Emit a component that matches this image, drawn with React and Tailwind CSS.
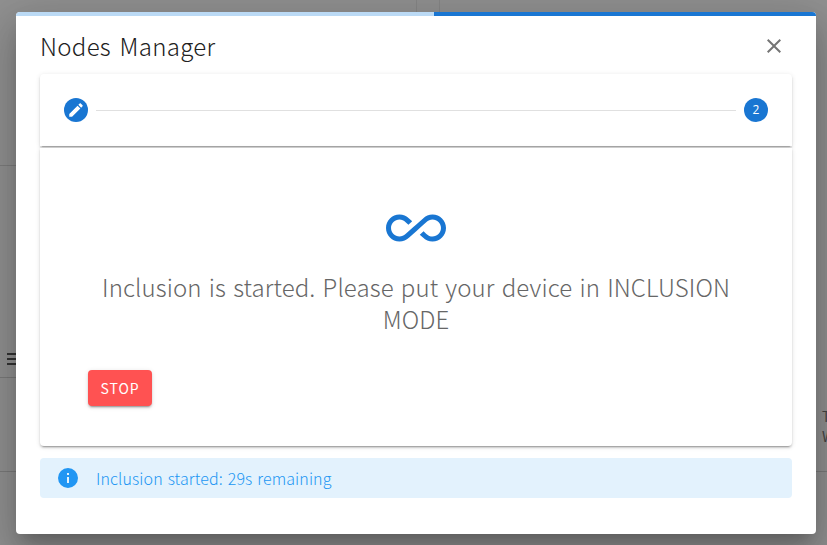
import React from "react";

const FONT = "font-['Noto_Sans_CJK_KR','Noto_Sans',sans-serif]";

function MdiIcon({ d, className }) {
  return (
    <svg viewBox="0 0 24 24" fill="currentColor" className={className}>
      <path d={d} />
    </svg>
  );
}

const PENCIL =
  "M20.71,7.04C21.1,6.65 21.1,6 20.71,5.63L18.37,3.29C18,2.9 17.35,2.9 16.96,3.29L15.12,5.12L18.87,8.87M3,17.25V21H6.75L17.81,9.93L14.06,6.18L3,17.25Z";
const CLOSE =
  "M19,6.41L17.59,5L12,10.59L6.41,5L5,6.41L10.59,12L5,17.59L6.41,19L12,13.41L17.59,19L19,17.59L13.41,12L19,6.41Z";
const INFO =
  "M13,9H11V7H13M13,17H11V11H13M12,2A10,10 0 0,0 2,12A10,10 0 0,0 12,22A10,10 0 0,0 22,12A10,10 0 0,0 12,2Z";
const ALL_INCLUSIVE =
  "M18.6 6.62c-1.44 0-2.8.56-3.77 1.53L12 10.66 10.48 12h.01L7.8 14.39c-.64.64-1.49.99-2.4.99-1.87 0-3.39-1.51-3.39-3.38S3.53 8.62 5.4 8.62c.91 0 1.76.35 2.44 1.03l1.13 1 1.51-1.34L9.22 8.2C8.2 7.18 6.84 6.62 5.4 6.62 2.42 6.62 0 9.04 0 12s2.42 5.38 5.4 5.38c1.44 0 2.8-.56 3.77-1.53l2.83-2.5.01.01L13.52 12h-.01l2.69-2.39c.64-.64 1.49-.99 2.4-.99 1.87 0 3.39 1.51 3.39 3.38s-1.52 3.38-3.39 3.38c-.9 0-1.76-.35-2.44-1.03l-1.14-1.01-1.51 1.34 1.27 1.12c1.02 1.01 2.37 1.57 3.82 1.57 2.98 0 5.4-2.41 5.4-5.38s-2.42-5.37-5.4-5.37z";

const CARD_SHADOW =
  "shadow-[0_3px_1px_-2px_rgba(0,0,0,0.2),0_2px_2px_0_rgba(0,0,0,0.14),0_1px_5px_0_rgba(0,0,0,0.12)]";

export default function App() {
  return (
    <div className={`relative h-[545px] w-[827px] overflow-hidden bg-[#909090] ${FONT}`}>
      {/* Dimmed page behind the dialog */}
      <div className="absolute left-0 top-[165px] h-px w-4 bg-[#7d7d7d]" />
      <div className="absolute left-0 top-[377px] h-px w-4 bg-[#7a7a7a]" />
      <div className="absolute left-0 top-[471px] h-px w-4 bg-[#7a7a7a]" />
      <div className="absolute right-0 top-[471px] h-px w-[11px] bg-[#7a7a7a]" />
      <div className="absolute left-[416px] top-0 h-3 w-px bg-[#858585]" />
      <div className="absolute left-[439px] top-0 h-3 w-px bg-[#858585]" />
      <div className="absolute left-[7px] top-[353px] flex w-[10px] flex-col gap-[3px]">
        <div className="h-[2px] bg-[#333]" />
        <div className="h-[2px] bg-[#333]" />
        <div className="h-[2px] bg-[#333]" />
      </div>
      <div className="absolute left-[822px] top-[406px] text-sm leading-5 text-[#444]">
        <div>T</div>
        <div>W</div>
      </div>

      {/* Dialog */}
      <div className="absolute left-4 top-3 flex h-[522px] w-[800px] flex-col overflow-hidden rounded bg-white shadow-[0_11px_15px_-7px_rgba(0,0,0,0.2),0_24px_38px_3px_rgba(0,0,0,0.14),0_9px_46px_8px_rgba(0,0,0,0.12)]">
        <div className="flex h-1 bg-[#bbdaf5]">
          <div className="w-[418px]" />
          <div className="flex-1 bg-[#1976d2]" />
        </div>

        <div className="flex h-[58px] items-center justify-between pl-6 pr-[30px]">
          <span className="mt-[2px] text-2xl font-light tracking-[0.3px] text-[#212121] [word-spacing:3px]">Nodes Manager</span>
          <MdiIcon d={CLOSE} className="mt-[2px] h-6 w-6 text-[#757575]" />
        </div>

        <div className="mx-6 flex flex-col">
          {/* Stepper */}
          <div className={`flex h-[72px] items-center gap-2 rounded-t bg-white px-6 ${CARD_SHADOW}`}>
            <div className="flex h-6 w-6 items-center justify-center rounded-full bg-[#1976d2] text-white">
              <MdiIcon d={PENCIL} className="h-[18px] w-[18px]" />
            </div>
            <div className="h-px flex-1 bg-[#e0e0e0]" />
            <div className="flex h-6 w-6 items-center justify-center rounded-full bg-[#1976d2] font-['Open_Sans',sans-serif] text-xs text-white">
              2
            </div>
          </div>

          {/* Step content */}
          <div className={`mt-[2px] flex h-[298px] flex-col rounded-b bg-white px-12 ${CARD_SHADOW}`}>
            <MdiIcon d={ALL_INCLUSIVE} className="mx-auto mt-[50px] h-[60px] w-[60px] text-[#1976d2]" />
            <p className="mt-[13px] text-center text-2xl font-light leading-8 tracking-[0.1px] text-[#666666] [word-spacing:1.75px]">
              Inclusion is started. Please put your device in INCLUSION MODE
            </p>
            <button className={`mt-[35px] h-9 w-16 rounded bg-[#ff5252] text-sm font-normal tracking-[0.9px] text-white ${CARD_SHADOW}`}>
              STOP
            </button>
          </div>

          {/* Status */}
          <div className="mt-3 flex h-10 items-center rounded bg-[#e3f2fd] px-4 text-[#2196f3]">
            <MdiIcon d={INFO} className="h-6 w-6" />
            <span className="-mt-px ml-4 text-base font-light tracking-[0.1px] [word-spacing:1.3px]">Inclusion started: 29s remaining</span>
          </div>
        </div>
      </div>
    </div>
  );
}
